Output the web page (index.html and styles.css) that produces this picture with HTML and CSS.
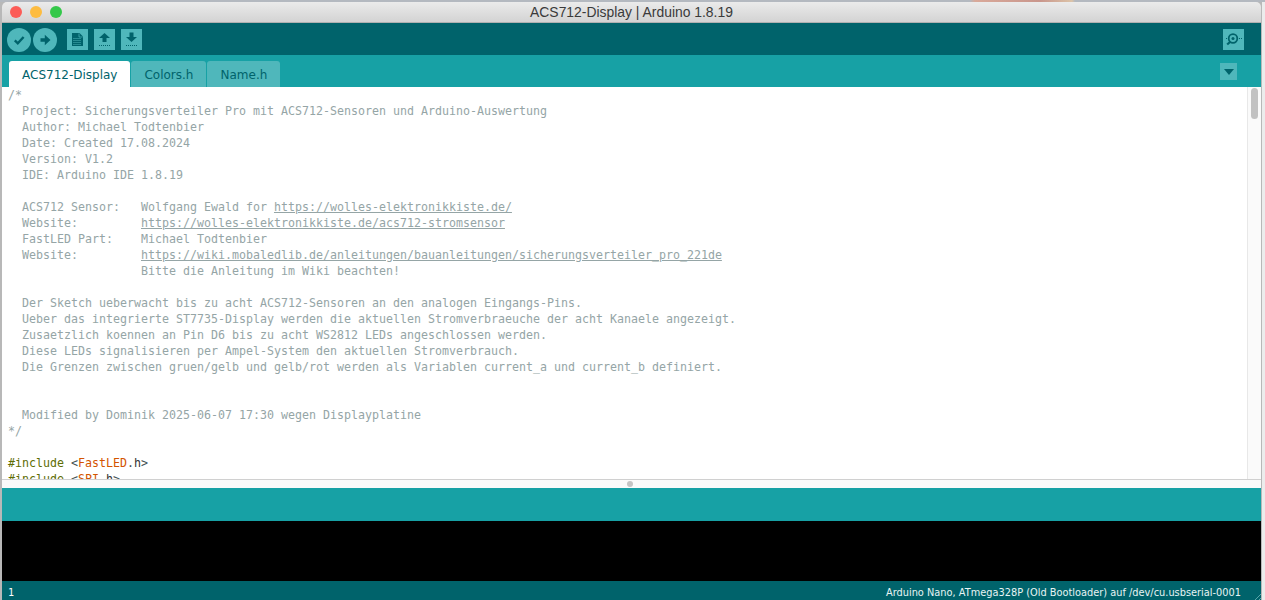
FILE: index.html
```html
<!DOCTYPE html>
<html lang="de">
<head>
<meta charset="utf-8">
<title>ACS712-Display | Arduino 1.8.19</title>
<link rel="stylesheet" href="styles.css">
</head>
<body>
<div class="window">
  <header class="titlebar">
    <div class="lights"><span class="light red"></span><span class="light yellow"></span><span class="light green"></span></div>
    <div class="title">ACS712-Display | Arduino 1.8.19</div>
  </header>
  <div class="toolbar">
    <button class="round"><svg width="24" height="24" viewBox="0 0 24 24"><path d="M7.800 12.300l3 3 5.800-6.300" fill="none" stroke="#00636b" stroke-width="2.400"/></svg></button>
    <button class="round"><svg width="24" height="24" viewBox="0 0 24 24"><path d="M7.500 10.300h4.300V6.800l5.700 5.200-5.700 5.200v-3.500H7.500z" fill="#00636b"/></svg></button>
    <button class="square first"><svg width="21" height="21" viewBox="0 0 21 21"><path d="M5 4h7.500L16 7.500V17H5z" fill="#00636b"/><path d="M12 4.500v3.500h3.500" fill="none" stroke="#4fb7bb" stroke-width=".7"/><path d="M6.500 9.500h8M6.500 11.500h8M6.500 13.500h8M6.500 15.500h8" stroke="#4fb7bb" stroke-width="1" stroke-dasharray="1 1"/></svg></button>
    <button class="square"><svg width="21" height="21" viewBox="0 0 21 21"><path d="M10.500 4l5.500 5h-3.500v4h-4V9H5z" fill="#00636b"/><path d="M5 16.500h11" stroke="#00636b" stroke-dasharray="1 1"/></svg></button>
    <button class="square"><svg width="21" height="21" viewBox="0 0 21 21"><path d="M10.500 13l5.500-5h-3.500V3.500h-4V8H5z" fill="#00636b"/><path d="M5 16.500h11" stroke="#00636b" stroke-dasharray="1 1"/></svg></button>
    <button class="square monitor"><svg width="21" height="21" viewBox="0 0 21 21"><circle cx="10" cy="9.500" r="4.300" fill="none" stroke="#00636b" stroke-width="1.800"/><circle cx="10" cy="9.500" r="1.500" fill="#00636b"/><path d="M7 13l-2.800 2.500" stroke="#00636b" stroke-width="2.200"/><path d="M3 9.500h1M16 9.500h1M18 9.500h1" stroke="#00636b"/></svg></button>
  </div>
  <nav class="tabbar">
    <div class="tab active">ACS712-Display</div>
    <div class="tab">Colors.h</div>
    <div class="tab">Name.h</div>
    <button class="tabmenu"><svg width="12" height="6" viewBox="0 0 12 6"><path d="M1 0h10L6 6z" fill="#00636b"/></svg></button>
  </nav>
  <main class="editor">
<pre class="code"><span class="cm">/*
  Project: Sicherungsverteiler Pro mit ACS712-Sensoren und Arduino-Auswertung
  Author: Michael Todtenbier
  Date: Created 17.08.2024
  Version: V1.2
  IDE: Arduino IDE 1.8.19

  ACS712 Sensor:   Wolfgang Ewald for <u>https://wolles-elektronikkiste.de/</u>
  Website:         <u>https://wolles-elektronikkiste.de/acs712-stromsensor</u>
  FastLED Part:    Michael Todtenbier
  Website:         <u>https://wiki.mobaledlib.de/anleitungen/bauanleitungen/sicherungsverteiler_pro_221de</u>
                   Bitte die Anleitung im Wiki beachten!

  Der Sketch ueberwacht bis zu acht ACS712-Sensoren an den analogen Eingangs-Pins.
  Ueber das integrierte ST7735-Display werden die aktuellen Stromverbraeuche der acht Kanaele angezeigt.
  Zusaetzlich koennen an Pin D6 bis zu acht WS2812 LEDs angeschlossen werden.
  Diese LEDs signalisieren per Ampel-System den aktuellen Stromverbrauch.
  Die Grenzen zwischen gruen/gelb und gelb/rot werden als Variablen current_a und current_b definiert.


  Modified by Dominik 2025-06-07 17:30 wegen Displayplatine
*/</span>

<span class="pp">#include</span> <span class="op">&lt;</span><span class="lib">FastLED</span><span class="op">.</span>h<span class="op">&gt;</span>
<span class="pp">#include</span> <span class="op">&lt;</span><span class="lib">SPI</span><span class="op">.</span>h<span class="op">&gt;</span></pre>
    <div class="scrolltrack"><div class="scrollthumb"></div></div>
  </main>
  <div class="divider"><span class="grip"></span></div>
  <div class="message"></div>
  <div class="console"></div>
  <footer class="status">
    <span class="line">1</span>
    <span class="board">Arduino Nano, ATmega328P (Old Bootloader) auf /dev/cu.usbserial-0001</span>
    <span class="resize"></span>
  </footer>
</div>
</body>
</html>
```

FILE: styles.css
```css
* { box-sizing: border-box; }
html, body { margin: 0; height: 100%; overflow: hidden; background: #fff; }
.window {
  height: 600px;
  display: flex;
  flex-direction: column;
  padding: 2px 4px 0 2px;
  background:
    linear-gradient(90deg, #b4b9c0 970px, #d9a99a 975px, #c9968c 1040px, #dcc3a8 1072px, #b4b9c0 1075px) 0 0 / 100% 2px no-repeat,
    linear-gradient(90deg, #b8b8b8 2px, #b8b8b8 1261px, #b8b8b8 1262px, #ececec 1262px);
  font-family: "Liberation Sans", Arial, sans-serif;
}
.titlebar {
  height: 21px;
  flex: none;
  display: flex;
  align-items: center;
  position: relative;
  background: linear-gradient(#ebebeb, #d3d3d3);
  border-bottom: 1px solid #b1b1b1;
  border-radius: 5px 5px 0 0;
}
.lights { display: flex; gap: 8px; padding-left: 8px; }
.light { width: 12px; height: 12px; border-radius: 50%; }
.red { background: #fc5c57; }
.yellow { background: #fdbc40; }
.green { background: #34c84a; }
.title {
  position: absolute;
  left: 0;
  right: 0;
  text-align: center;
  font-size: 13.900px;
  color: #3a3a3a;
}
.toolbar {
  height: 32px;
  flex: none;
  display: flex;
  align-items: center;
  padding: 0 17px 0 5px;
  background: #00636b;
}
button { border: 0; padding: 0; display: flex; align-items: center; justify-content: center; }
.round { width: 24px; height: 24px; border-radius: 50%; background: #4fb7bb; margin: 2px 2px 0 0; }
.square { width: 21px; height: 21px; background: #4fb7bb; margin-right: 6px; }
.square.first { margin-left: 8px; }
.square.monitor { margin: 0 0 0 auto; }
.tabbar {
  height: 32px;
  flex: none;
  display: flex;
  align-items: flex-end;
  gap: 1px;
  padding: 0 24px 0 7px;
  background: #17a1a5;
}
.tab {
  height: 26px;
  padding: 1px 13px 0;
  display: flex;
  align-items: center;
  border-radius: 3px 3px 0 0;
  background: #4fb7bb;
  color: #00636b;
  font-family: "DejaVu Sans", sans-serif;
  font-size: 12px;
}
.tab.active { background: #fff; color: #00636b; }
.tabmenu { width: 17px; height: 17px; margin: 0 0 7px auto; background: #4fb7bb; }
.editor { height: 392px; flex: none; display: flex; background: #fff; overflow: hidden; }
.code {
  flex: 1;
  min-width: 0;
  margin: 0;
  padding-left: 6px;
  font-family: "DejaVu Sans Mono", monospace;
  font-size: 11.630px;
  line-height: 16px;
  color: #333;
  overflow: hidden;
}
.cm { color: #95a5a6; }
.pp { color: #5e6d03; }
.lib { color: #d35400; }
.op { color: #434f54; }
.scrolltrack {
  width: 14px;
  flex: none;
  padding: 1px 3px 0 3px;
  background: #fafafa;
  border-left: 1px solid #e8e8e8;
}
.scrollthumb { height: 31px; border-radius: 4px; background: #c2c2c2; }
.divider {
  height: 9px;
  flex: none;
  display: flex;
  align-items: center;
  justify-content: center;
  padding-right: 3px;
  background: #fafafa;
  border-top: 1px solid #d0d0d0;
}
.grip { width: 6px; height: 6px; border-radius: 50%; background: #c4c4c4; }
.message { height: 33px; flex: none; background: #17a1a5; }
.console { height: 60px; flex: none; background: #000; }
.status {
  flex: 1;
  display: flex;
  align-items: center;
  justify-content: space-between;
  position: relative;
  padding: 3px 20px 0 6px;
  background: #00636b;
  color: #fff;
  font-family: "DejaVu Sans Mono", monospace;
  font-size: 10px;
}
.board {
  font-family: "DejaVu Sans", sans-serif;
  color: #e8f4f4;
  font-size: 9.800px;
}
.resize {
  position: absolute;
  right: 0;
  bottom: 0;
  width: 9px;
  height: 9px;
  background: repeating-linear-gradient(135deg, transparent 0 2px, #5aa5a9 2px 3px);
  clip-path: polygon(100% 0, 100% 100%, 0 100%);
}
```
